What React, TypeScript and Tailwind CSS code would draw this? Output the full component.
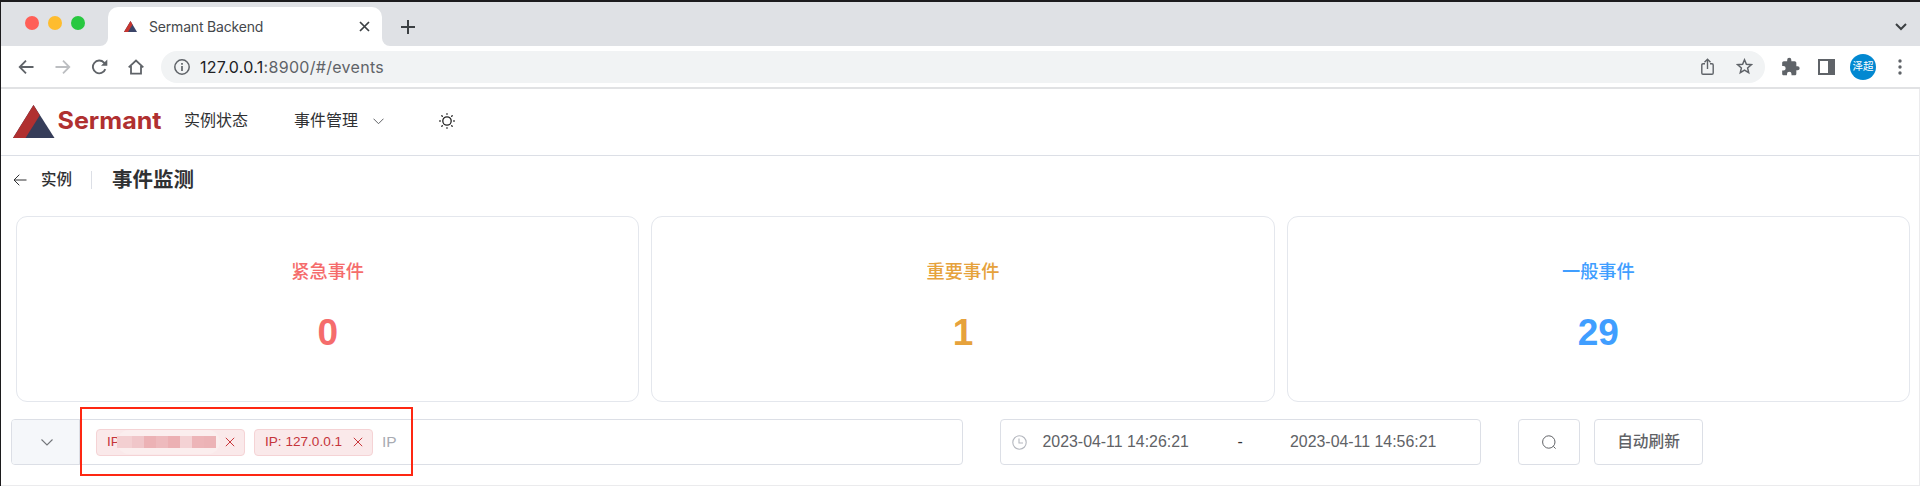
import type { ReactNode } from "react";

function TabStrip() {
  return (
    <div className="flex h-11 items-end bg-[#dfe1e5]">
      <div className="flex h-11 w-[107px] items-center pl-6 pb-0.5">
        <div className="flex gap-[9px]">
          <span className="size-3.5 rounded-full bg-[#ff5f57]" />
          <span className="size-3.5 rounded-full bg-[#febc2e]" />
          <span className="size-3.5 rounded-full bg-[#28c840]" />
        </div>
      </div>
      <div className="relative flex h-[39px] w-[274px] items-center rounded-t-[10px] bg-white pl-4">
        <svg className="absolute bottom-0 -left-2" width="8" height="8" viewBox="0 0 8 8">
          <path d="M8 0v8H0a8 8 0 0 0 8-8z" fill="#fff" />
        </svg>
        <svg className="absolute -right-2 bottom-0" width="8" height="8" viewBox="0 0 8 8">
          <path d="M0 0v8h8a8 8 0 0 1-8-8z" fill="#fff" />
        </svg>
        <svg width="13" height="11" viewBox="0 0 13 11">
          <path d="M6.5 0L13 11H0z" fill="#3b4468" />
          <path d="M6.5 0l2 3.4L4 11H0z" fill="#c8352f" />
        </svg>
        <span className="ml-3 w-[210px] whitespace-nowrap font-['Inter',sans-serif] text-[14px] leading-5 tracking-[-0.18px] text-[#45484c]">
          Sermant Backend
        </span>
        <svg className="shrink-0" width="11" height="11" viewBox="0 0 11 11" stroke="#3c4043" strokeWidth="1.7">
          <path d="M1 1l9 9M10 1l-9 9" />
        </svg>
      </div>
      <svg className="mb-3 ml-[19px]" width="14" height="14" viewBox="0 0 14 14" stroke="#3c4043" strokeWidth="2">
        <path d="M7 0v14M0 7h14" />
      </svg>
      <svg className="mr-[13px] mb-[15px] ml-auto" width="12" height="8" viewBox="0 0 12 8" fill="none" stroke="#3c4043" strokeWidth="2">
        <path d="M1 1l5 5 5-5" />
      </svg>
    </div>
  );
}

function Toolbar() {
  return (
    <div className="flex h-[41px] items-center bg-white">
      <svg className="ml-[17px]" width="16" height="14" viewBox="0 0 16 14" fill="none" stroke="#5f6368" strokeWidth="1.8">
        <path d="M15.5 7H1.5M8 .7L1.7 7 8 13.3" />
      </svg>
      <svg className="ml-[21px]" width="16" height="14" viewBox="0 0 16 14" fill="none" stroke="#bcbec1" strokeWidth="1.8">
        <path d="M.5 7h14M8 .7L14.3 7 8 13.3" />
      </svg>
      <svg className="ml-[20px]" width="17" height="16" viewBox="0 0 17 16" fill="none" stroke="#5f6368" strokeWidth="1.9">
        <path d="M14.3 10.2A6.4 6.4 0 1 1 13 3.6L14.5 5.2" />
        <path d="M16.3.5v6.3H10z" fill="#5f6368" stroke="none" />
      </svg>
      <svg className="ml-[20px]" width="16" height="16" viewBox="0 0 16 16" fill="none" stroke="#5f6368" strokeWidth="1.8">
        <path d="M.7 8.3L8 1.5l7.3 6.8M3 7v7.6h10V7" />
      </svg>
      <div className="ml-[17px] flex h-8 w-[1604px] items-center rounded-full bg-[#f1f3f4] pl-[13px]">
        <svg width="16" height="16" viewBox="0 0 16 16" fill="none" stroke="#5f6368" strokeWidth="1.5">
          <circle cx="8" cy="8" r="7.2" />
          <path d="M8 7v5M8 4v1.7" strokeWidth="1.7" />
        </svg>
        <span className="ml-2.5 whitespace-nowrap font-['Inter',sans-serif] text-[16px] leading-6 tracking-[0.3px] text-[#5f6368]">
          <span className="text-[#202124]">127.0.0.1</span>:8900/#/events
        </span>
        <svg className="ml-auto" width="13" height="17" viewBox="0 0 13 17" fill="none" stroke="#5f6368" strokeWidth="1.4">
          <path d="M4 5.7H2a1.2 1.2 0 0 0-1.2 1.2V15A1.2 1.2 0 0 0 2 16.2h9A1.2 1.2 0 0 0 12.2 15V6.9A1.2 1.2 0 0 0 11 5.7H9M6.5 11V1.5M3.5 4.3l3-3 3 3" />
        </svg>
        <svg className="mr-[12px] ml-[22px]" width="17" height="17" viewBox="0 0 17 17" fill="none" stroke="#5f6368" strokeWidth="1.5">
          <path d="M8.5 1.8l1.9 4.5 4.9.4-3.7 3.2 1.1 4.8-4.2-2.5-4.2 2.5 1.1-4.8L1.7 6.7l4.9-.4z" />
        </svg>
      </div>
      <svg className="ml-[15px]" width="21" height="20" viewBox="0 0 24 24" fill="#5f6368">
        <path d="M20.5 11H19V7c0-1.1-.9-2-2-2h-4V3.5a2.5 2.5 0 0 0-5 0V5H4c-1.1 0-2 .9-2 2v3.8h1.5a2.7 2.7 0 0 1 0 5.4H2V20c0 1.100.9 2 2 2h3.8v-1.500a2.700 2.700 0 0 1 5.400 0V22H17c1.100 0 2-.9 2-2v-4h1.500a2.500 2.500 0 0 0 0-5z" />
      </svg>
      <svg className="ml-[17px]" width="17" height="16" viewBox="0 0 17 16">
        <path d="M0 0h17v16H0zM2 2v12h8V2z" fill="#5f6368" fillRule="evenodd" />
      </svg>
      <span className="ml-[15px] flex size-[26px] shrink-0 items-center justify-center rounded-full bg-[#0288d1] pb-px font-['Noto_Sans_CJK_SC',sans-serif] text-[10.5px] leading-none whitespace-nowrap text-white">
        泽超
      </span>
      <svg className="ml-[22px]" width="4" height="16" viewBox="0 0 4 16" fill="#5f6368">
        <circle cx="2" cy="2" r="1.7" />
        <circle cx="2" cy="8" r="1.7" />
        <circle cx="2" cy="14" r="1.7" />
      </svg>
    </div>
  );
}

function Header() {
  return (
    <header className="flex h-[67px] items-center border-b border-[#dcdfe6] pb-0.5 text-[16px] text-[#303133]">
      <svg className="mt-0.5 ml-3" width="152" height="36" viewBox="0 0 152 36">
        <path d="M20.5 1L41.500 34H0z" fill="#363d59" />
        <path d="M20.5 1l6.3 10.300L12.500 34H0z" fill="#b03030" />
        <text
          x="44.5"
          y="25"
          textLength="104"
          lengthAdjust="spacingAndGlyphs"
          fill="#b03030"
          className="font-['Inter',sans-serif] text-[24px] font-bold"
        >
          Sermant
        </text>
      </svg>
      <span className="ml-[19px] w-[110px]">实例状态</span>
      <span>事件管理</span>
      <svg className="ml-[15px]" width="11" height="7" viewBox="0 0 11 7" fill="none" stroke="#606266" strokeWidth="1">
        <path d="M.5.7l5 5 5-5" />
      </svg>
      <svg className="ml-[55px]" width="16" height="16" viewBox="0 0 16 16" fill="none" stroke="#222" strokeWidth="1.3" strokeLinecap="round">
        <circle cx="8" cy="8" r="4.2" />
        <path d="M8 .7v.6M8 14.7v.6M.7 8h.6M14.7 8h.6M2.8 2.8l.5.5M12.7 12.7l.5.5M2.8 13.2l.5-.5M12.7 3.3l.5-.5" />
      </svg>
    </header>
  );
}

function PageTitle() {
  return (
    <div className="flex h-12 items-center text-[#303133]">
      <svg className="ml-3" width="14" height="12" viewBox="0 0 14 12" fill="none" stroke="#303133" strokeWidth="1">
        <path d="M13.5 6H1M6.3.7L1 6l5.300 5.300" />
      </svg>
      <span className="ml-3.5 text-[15.5px] font-medium">实例</span>
      <span className="ml-[19px] h-[18px] w-px bg-[#dcdfe6]" />
      <span className="ml-5 text-[20.5px] font-semibold">事件监测</span>
    </div>
  );
}

function StatCard({ title, value, color }: { title: string; value: number; color: string }) {
  return (
    <div className={`flex h-[186px] flex-1 flex-col items-center rounded-[11px] border border-[#e4e7ed] pt-[41px] ${color}`}>
      <span className="text-[18.2px] leading-7 font-medium">{title}</span>
      <span className="mt-[27px] text-[37px] leading-10 font-bold">{value}</span>
    </div>
  );
}

function CloseMark() {
  return (
    <svg width="10" height="10" viewBox="0 0 10 10" stroke="#c9373b" strokeWidth="1">
      <path d="M.8.8l8.4 8.4M9.2.8L.8 9.2" />
    </svg>
  );
}

function Tag({ children, width }: { children: ReactNode; width: string }) {
  return (
    <span className={`flex h-[27px] items-center justify-between rounded border border-[#f5d3d5] bg-[#fae9ea] pr-[9px] pl-[10px] text-[13.6px] text-[#c5343a] ${width}`}>
      {children}
      <CloseMark />
    </span>
  );
}

const mosaic = [
  "w-[15px] bg-[#f3cfd1]",
  "w-3 bg-[#f0c6c9]",
  "w-3 bg-[#ecb2b5]",
  "w-3 bg-[#eebabd]",
  "w-3 bg-[#ecb0b3]",
  "w-3 bg-[#f4d2d4]",
  "w-3 bg-[#edb5b8]",
  "w-3 bg-[#ecb3b6]",
];

function FilterBar() {
  return (
    <div className="mt-[17px] ml-[10px] flex h-[46px]">
      <div className="relative flex w-[952px] rounded-[4px] border border-[#dcdfe6]">
        <div className="flex w-[68px] items-center justify-center rounded-l-[3px] border-r border-[#dcdfe6] bg-[#f5f7fa] pl-[3px]">
          <svg width="12" height="7" viewBox="0 0 12 7" fill="none" stroke="#73767a" strokeWidth="1.1">
            <path d="M.5.5L6 6 11.5.5" />
          </svg>
        </div>
        <div className="ml-4 flex items-center">
          <Tag width="w-[149px]">
            <span className="flex items-center">
              IP
              <span className="-ml-[3px] flex h-6 items-center rounded-full bg-[#fbeeee] pr-1">
                {mosaic.map((tile, i) => (
                  <span key={i} className={`h-3 ${tile}`} />
                ))}
              </span>
            </span>
          </Tag>
          <span className="w-[9px]" />
          <Tag width="w-[119px]">IP: 127.0.0.1</Tag>
          <span className="ml-[9px] text-[15.5px] text-[#a8abb2]">IP</span>
        </div>
        <div className="absolute -top-[13px] left-[68px] h-[69px] w-[333px] border-2 border-[#fe2712]" />
      </div>
      <div className="ml-[37px] flex w-[481px] items-center rounded-[4px] border border-[#dcdfe6] text-[15.9px] text-[#606266]">
        <svg className="ml-[11px]" width="15" height="15" viewBox="0 0 15 15" fill="none" stroke="#b5b8bf" strokeWidth="1.1">
          <circle cx="7.5" cy="7.5" r="6.7" />
          <path d="M7 3.5v4.500h4" />
        </svg>
        <span className="ml-[15.5px] w-[195px]">2023-04-11 14:26:21</span>
        <span className="w-[52.5px] text-[#303133]">-</span>
        <span>2023-04-11 14:56:21</span>
      </div>
      <button className="ml-[37px] flex w-[62px] items-center justify-center rounded-[4px] border border-[#dcdfe6]">
        <svg width="14" height="14" viewBox="0 0 14 14" fill="none" stroke="#606266" strokeWidth="1">
          <circle cx="6.8" cy="7" r="6.2" />
          <path d="M11.4 11.400l2.200 2.200" />
        </svg>
      </button>
      <button className="ml-[14px] flex w-[109px] items-center justify-center rounded-[4px] border border-[#dcdfe6] text-[15.7px] font-medium text-[#606266]">
        自动刷新
      </button>
    </div>
  );
}

export default function App() {
  return (
    <div className="h-[486px] w-[1920px] overflow-hidden border-t-2 border-l border-[#1c1b1d] bg-white font-['Liberation_Sans','Noto_Sans_CJK_SC',sans-serif]">
      <div className="flex h-[484px] flex-col">
        <TabStrip />
        <Toolbar />
        <div className="h-0.5 shrink-0 bg-[#e1e2e4]" />
        <div className="h-[397px] border-r border-b border-[#ebebed]">
          <Header />
          <PageTitle />
          <div className="mt-3 mr-[9px] ml-[15px] flex gap-3">
            <StatCard title="紧急事件" value={0} color="text-[#f56c6c]" />
            <StatCard title="重要事件" value={1} color="text-[#e6a23c]" />
            <StatCard title="一般事件" value={29} color="text-[#409eff]" />
          </div>
          <FilterBar />
        </div>
      </div>
    </div>
  );
}
